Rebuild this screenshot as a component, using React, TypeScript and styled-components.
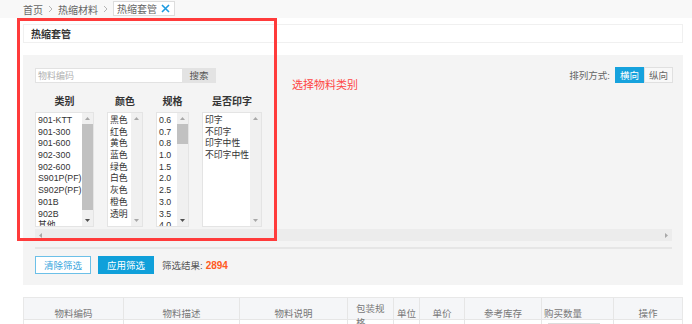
import React from "react";
import styled, { createGlobalStyle } from "styled-components";

const GlobalStyle = createGlobalStyle`
  body {
    margin: 0;
    background: #fff;
    font-family: "Liberation Sans", "Noto Sans CJK SC", sans-serif;
    font-size: 10px;
    color: #333;
  }
`;

const Page = styled.div`
  position: relative;
  width: 692px;
  height: 324px;
  overflow: hidden;
  background: #fff;
`;

const TopBar = styled.div`
  height: 18px;
  background: #f8f8f8;
  display: flex;
  align-items: center;
  padding-left: 23px;
  gap: 5px;
  color: #666;
  font-size: 10px;
`;

const Crumb = styled.span`
  color: #666;
`;

const Tag = styled.span`
  display: flex;
  align-items: center;
  gap: 4px;
  height: 13px;
  margin-top: -2px;
  padding: 0 4px 0 3px;
  background: #fff;
  border: 1px solid #ddd;
  color: #666;
`;

const Content = styled.div`
  padding: 6px 9px 0 23px;
`;

const TitlePanel = styled.div`
  height: 17px;
  border: 1px solid #f0f0f0;
  display: flex;
  align-items: center;
  padding-left: 7px;
  font-weight: bold;
  font-size: 10px;
  color: #333;
`;

const FilterPanel = styled.div`
  margin-top: 12px;
  background: #f4f4f4;
  padding: 12px 11px 11px 12px;
`;

const TopRow = styled.div`
  display: flex;
  justify-content: space-between;
  align-items: center;
`;

const SearchBox = styled.div`
  display: flex;
  height: 15px;
`;

const SearchInput = styled.div`
  width: 144px;
  border: 1px solid #e2e2e2;
  border-right: none;
  background: #fff;
  color: #b0b0b0;
  font-size: 9px;
  display: flex;
  align-items: center;
  padding-left: 2px;
`;

const SearchButton = styled.div`
  width: 34px;
  background: #e3e3e3;
  color: #555;
  font-size: 9.5px;
  display: flex;
  align-items: center;
  justify-content: center;
`;

const SortGroup = styled.div`
  display: flex;
  align-items: center;
  color: #666;
  font-size: 9.5px;
  margin-right: -1px;
`;

const SortLabel = styled.span`
  margin-right: 5px;
`;

const SortButton = styled.div<{ $active?: boolean }>`
  width: 27px;
  height: 14px;
  display: flex;
  align-items: center;
  justify-content: center;
  font-size: 9.5px;
  background: ${({ $active }) => ($active ? "#16a2dd" : "#f8f8f8")};
  color: ${({ $active }) => ($active ? "#fff" : "#666")};
  border: 1px solid ${({ $active }) => ($active ? "#16a2dd" : "#e0e0e0")};
`;

const Columns = styled.div`
  display: flex;
  gap: 13px;
  margin-top: 13px;
`;

const Column = styled.div<{ $width: number }>`
  width: ${({ $width }) => $width}px;
  display: flex;
  flex-direction: column;
  align-items: center;
`;

const ColumnTitle = styled.div`
  font-weight: bold;
  font-size: 10px;
  line-height: 12px;
  color: #333;
  white-space: nowrap;
  margin-bottom: 4px;
`;

const ListBox = styled.div`
  width: 100%;
  height: 115px;
  box-sizing: border-box;
  border: 1px solid #e4e4e4;
  background: #fff;
  display: flex;
  overflow: hidden;
`;

const ListItems = styled.ul`
  flex: 1;
  margin: 0;
  padding: 2px 0 0 2px;
  list-style: none;
  overflow: hidden;
`;

const ListItem = styled.li`
  font-size: 8.8px;
  line-height: 11.7px;
  height: 11.7px;
  color: #333;
  white-space: nowrap;
`;

const VScroll = styled.div`
  width: 11px;
  flex-shrink: 0;
  background: #f0f0f0;
  display: flex;
  flex-direction: column;
`;

const ArrowCell = styled.div`
  height: 11px;
  width: 11px;
  display: flex;
  align-items: center;
  justify-content: center;
  flex-shrink: 0;
`;

const Track = styled.div`
  flex: 1;
`;

const Thumb = styled.div<{ $height: number }>`
  height: ${({ $height }) => $height}px;
  background: #c1c1c1;
`;

const HScroll = styled.div`
  margin-top: 2px;
  height: 12px;
  background: #ececec;
  display: flex;
  justify-content: space-between;
  align-items: center;
`;

const Divider = styled.div`
  margin-top: 6px;
  height: 2px;
  background: #e6e6e6;
`;

const ActionRow = styled.div`
  display: flex;
  align-items: center;
  gap: 7px;
  margin-top: 7px;
`;

const ActionButton = styled.div<{ $primary?: boolean }>`
  width: 56px;
  height: 18px;
  box-sizing: border-box;
  display: flex;
  align-items: center;
  justify-content: center;
  font-size: 9.5px;
  background: ${({ $primary }) => ($primary ? "#0fa0da" : "#fff")};
  color: ${({ $primary }) => ($primary ? "#fff" : "#3aa6dd")};
  border: 1px solid ${({ $primary }) => ($primary ? "#0fa0da" : "#6cc0e8")};
`;

const ResultText = styled.span`
  margin-left: 1px;
  color: #555;
  font-size: 9.5px;
`;

const ResultCount = styled.span`
  color: #ff5a1f;
  font-weight: bold;
  font-size: 10px;
  margin-left: 3px;
`;

const Table = styled.div`
  margin-top: 12px;
  border: 1px solid #e8e8e8;
  border-bottom: none;
`;

const TableRow = styled.div<{ $head?: boolean }>`
  display: grid;
  grid-template-columns: 100px 116px 108px 46px 26px 45px 77px 72px 68px;
  height: ${({ $head }) => ($head ? "21px" : "24px")};
  background: ${({ $head }) => ($head ? "#f5f6f8" : "#fff")};
  border-bottom: 1px solid #e6e6e6;
`;

const HeadCell = styled.div<{ $align?: "left" | "center"; $wrap?: boolean }>`
  display: flex;
  align-items: ${({ $wrap }) => ($wrap ? "flex-start" : "center")};
  justify-content: ${({ $align }) => ($align === "left" ? "flex-start" : "center")};
  padding: ${({ $wrap, $align }) =>
    $wrap ? "4px 6px 0 8px" : $align === "left" ? "0 0 0 2px" : "0"};
  border-right: 1px solid #e6e6e6;
  color: #777;
  font-size: 9.5px;
  line-height: 14px;
  overflow: visible;
  white-space: ${({ $wrap }) => ($wrap ? "normal" : "nowrap")};
  &:last-child {
    border-right: none;
  }
`;

const BodyCell = styled.div`
  border-right: 1px solid #e6e6e6;
  padding: 3px 0 0 6px;
  &:last-child {
    border-right: none;
  }
`;

const QtyInput = styled.div`
  width: 50px;
  height: 14px;
  border: 1px solid #ddd;
  background: #fff;
`;

const Annotation = styled.div`
  position: absolute;
  left: 17px;
  top: 18px;
  width: 260px;
  height: 223px;
  box-sizing: border-box;
  border: 3px solid #ff3b3b;
  pointer-events: none;
`;

const AnnotationText = styled.div`
  position: absolute;
  left: 292px;
  top: 76px;
  color: #ff4545;
  font-size: 11px;
  font-family: "Noto Sans CJK SC", sans-serif;
`;

function Chevron() {
  return (
    <svg width="5" height="8" viewBox="0 0 5 8">
      <path d="M1 1 L4 4 L1 7" fill="none" stroke="#b5b5b5" strokeWidth="1" />
    </svg>
  );
}

function CloseIcon() {
  return (
    <svg width="9" height="9" viewBox="0 0 9 9">
      <path d="M1 1 L8 8 M8 1 L1 8" stroke="#1e9be0" strokeWidth="1.6" />
    </svg>
  );
}

function Arrow({ dir, dark }: { dir: "up" | "down" | "left" | "right"; dark?: boolean }) {
  const fill = dark ? "#505050" : "#a8a8a8";
  const points = {
    up: "0,3 2.5,0 5,3",
    down: "0,0 5,0 2.5,3",
    left: "3,0 3,5 0,2.5",
    right: "0,0 0,5 3,2.5",
  }[dir];
  const vertical = dir === "up" || dir === "down";
  return (
    <svg width={vertical ? 5 : 3} height={vertical ? 3 : 5}>
      <polygon points={points} fill={fill} />
    </svg>
  );
}

interface FilterColumn {
  title: string;
  width: number;
  items: string[];
  thumb?: number;
}

const filters: FilterColumn[] = [
  {
    title: "类别",
    width: 59,
    items: ["901-KTT", "901-300", "901-600", "902-300", "902-600", "S901P(PF)", "S902P(PF)", "901B", "902B", "其他"],
    thumb: 86,
  },
  {
    title: "颜色",
    width: 36,
    items: ["黑色", "红色", "黄色", "蓝色", "绿色", "白色", "灰色", "橙色", "透明"],
  },
  {
    title: "规格",
    width: 33,
    items: ["0.6", "0.7", "0.8", "1.0", "1.5", "2.0", "2.5", "3.0", "3.5", "4.0"],
    thumb: 20,
  },
  {
    title: "是否印字",
    width: 60,
    items: ["印字", "不印字", "印字中性", "不印字中性"],
  },
];

const headers = ["物料编码", "物料描述", "物料说明", "包装规格", "单位", "单价", "参考库存", "购买数量", "操作"];

function App() {
  return (
    <Page>
      <GlobalStyle />
      <TopBar>
        <Crumb>首页</Crumb>
        <Chevron />
        <Crumb>热缩材料</Crumb>
        <Chevron />
        <Tag>
          热缩套管
          <CloseIcon />
        </Tag>
      </TopBar>
      <Content>
        <TitlePanel>热缩套管</TitlePanel>
        <FilterPanel>
          <TopRow>
            <SearchBox>
              <SearchInput>物料编码</SearchInput>
              <SearchButton>搜索</SearchButton>
            </SearchBox>
            <SortGroup>
              <SortLabel>排列方式:</SortLabel>
              <SortButton $active>横向</SortButton>
              <SortButton>纵向</SortButton>
            </SortGroup>
          </TopRow>
          <Columns>
            {filters.map((col) => (
              <Column key={col.title} $width={col.width}>
                <ColumnTitle>{col.title}</ColumnTitle>
                <ListBox>
                  <ListItems>
                    {col.items.map((item) => (
                      <ListItem key={item}>{item}</ListItem>
                    ))}
                  </ListItems>
                  <VScroll>
                    <ArrowCell>
                      <Arrow dir="up" />
                    </ArrowCell>
                    <Track>{col.thumb ? <Thumb $height={col.thumb} /> : null}</Track>
                    <ArrowCell>
                      <Arrow dir="down" dark={!!col.thumb} />
                    </ArrowCell>
                  </VScroll>
                </ListBox>
              </Column>
            ))}
          </Columns>
          <HScroll>
            <ArrowCell>
              <Arrow dir="left" />
            </ArrowCell>
            <ArrowCell>
              <Arrow dir="right" />
            </ArrowCell>
          </HScroll>
          <Divider />
          <ActionRow>
            <ActionButton>清除筛选</ActionButton>
            <ActionButton $primary>应用筛选</ActionButton>
            <ResultText>
              筛选结果:
              <ResultCount>2894</ResultCount>
            </ResultText>
          </ActionRow>
        </FilterPanel>
        <Table>
          <TableRow $head>
            {headers.map((h) => (
              <HeadCell key={h} $wrap={h === "包装规格"} $align={h === "购买数量" ? "left" : "center"}>
                {h}
              </HeadCell>
            ))}
          </TableRow>
          <TableRow>
            {headers.map((h) => (
              <BodyCell key={h}>{h === "购买数量" ? <QtyInput /> : null}</BodyCell>
            ))}
          </TableRow>
        </Table>
      </Content>
      <Annotation />
      <AnnotationText>选择物料类别</AnnotationText>
    </Page>
  );
}

export default App;
